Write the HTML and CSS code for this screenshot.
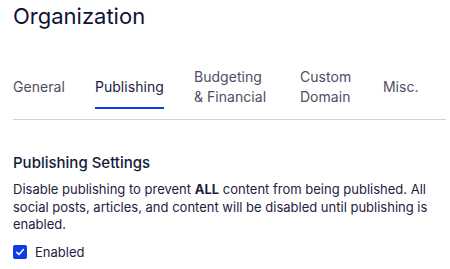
FILE: index.html
```html
<!DOCTYPE html>
<html lang="en">
<head>
  <meta charset="UTF-8">
  <title>Organization</title>
  <meta name="viewport" content="width=device-width, initial-scale=1">
  <link rel="stylesheet" href="styles.css">
</head>
<body>

<main class="page">
  <h1 class="page-title">Organization</h1>

  <nav class="tabs" role="tablist" aria-label="Organization settings">
    <a href="#" role="tab" class="tab" aria-selected="false"><span>General</span></a>
    <a href="#" role="tab" class="tab tab-active" aria-selected="true"><span>Publishing</span></a>
    <a href="#" role="tab" class="tab tab-budget" aria-selected="false"><span>Budgeting<br>&amp; Financial</span></a>
    <a href="#" role="tab" class="tab tab-domain" aria-selected="false"><span>Custom<br>Domain</span></a>
    <a href="#" role="tab" class="tab" aria-selected="false"><span>Misc.</span></a>
  </nav>

  <section class="settings">
    <h2 class="settings-title">Publishing Settings</h2>
    <p class="settings-text">Disable publishing to prevent <strong>ALL</strong> content from being published. All social posts, articles, and content will be disabled until publishing is enabled.</p>
    <label class="check">
      <input type="checkbox" class="check-input" checked>
      <span class="check-box" aria-hidden="true">
        <svg viewBox="0 0 14 14" width="14" height="14"><path d="M3.6 7.2 L6 9.5 L10.4 4.6" fill="none" stroke="#fff" stroke-width="1.5" stroke-linecap="round" stroke-linejoin="round"/></svg>
      </span>
      <span class="check-label">Enabled</span>
    </label>
  </section>
</main>

</body>
</html>
```

FILE: styles.css
```css
/* page base */
body { margin: 0; background: #fff; font-family: Inter, "Noto Sans", sans-serif; color: #151a3a; }
.page { padding: 0 4px 0 13px; }

.page-title { margin: 0; font-size: 22px; line-height: 32px; font-weight: 400; color: #0e1334; }

/* tabs */
.tabs { display: flex; gap: 30px; margin-top: 35px; padding-bottom: 10px; border-bottom: 1px solid #d0d0d6; }
.tab { display: flex; flex-direction: column; justify-content: center; height: 40px; border-bottom: 2px solid transparent; font-size: 14px; line-height: 20px; color: #4e4e62; text-decoration: none; letter-spacing: 0.05px; }
.tab-active { color: #1a1d3f; border-bottom-color: #0a3de8; }
.tab-budget { width: 76px; }
.tab-domain { width: 53px; }

/* settings block */
.settings { margin-top: 33px; }
.settings-title { margin: 0; font-size: 15px; line-height: 20px; font-weight: 500; color: #151a3a; }
.settings-text { margin: 8px 0 0; font-size: 13px; line-height: 17.5px; color: #1e2140; }
.settings-text strong { font-weight: 700; }

.check { display: flex; align-items: center; gap: 8px; margin-top: 9px; font-size: 13px; line-height: 18px; color: #1e2140; cursor: pointer; }
.check-input { position: absolute; opacity: 0; width: 1px; height: 1px; margin: 0; }
.check-box { display: flex; width: 14px; height: 14px; border-radius: 2px; background: #0f3ce8; }
```
